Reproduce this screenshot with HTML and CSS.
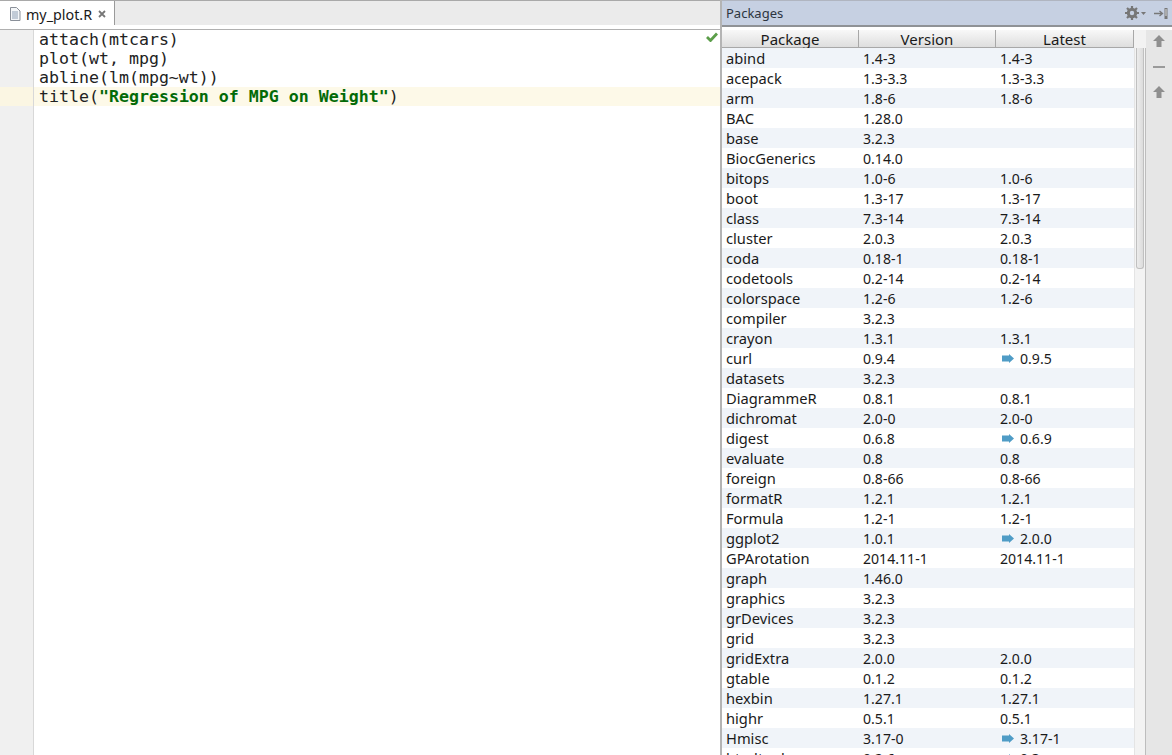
FILE: index.html
```html
<!DOCTYPE html>
<html lang="en">
<head>
<meta charset="utf-8">
<title>my_plot.R</title>
<link rel="stylesheet" href="styles.css">
</head>
<body>
<div class="app">
  <section class="editor">
    <div class="tabbar">
      <div class="tab">
        <svg class="file-icon" width="12" height="14" viewBox="0 0 12 14"><path d="M1.500 .5h6l3.500 3.500v9.500h-9.500z" fill="#f4f6f8" stroke="#8a9099"/><path d="M3 5h6M3 7h6M3 9h6M3 11h6" stroke="#8fa0b5"/></svg>
        <span class="tab-name">my_plot.R</span>
        <svg class="tab-close" width="8" height="8" viewBox="0 0 8 8"><path d="M1 1l6 6M7 1l-6 6" stroke="#777" stroke-width="1.800"/></svg>
      </div>
    </div>
    <div class="code">
      <div class="gutter"><div class="gutter-hl"></div></div>
      <div class="lines">
        <div class="line">attach(mtcars)</div>
        <div class="line">plot(wt, mpg)</div>
        <div class="line">abline(lm(mpg~wt))</div>
        <div class="line current">title(<span class="str">"Regression of MPG on Weight"</span>)</div>
        <svg class="check" width="12" height="10" viewBox="0 0 12 10"><path d="M1 5l3.500 3.500 6.500-7" fill="none" stroke="#5c9e4a" stroke-width="2.800"/></svg>
      </div>
    </div>
  </section>
  <section class="packages">
    <div class="panel-head">
      <span class="panel-title">Packages</span>
      <div class="panel-tools">
        <svg width="14" height="14" viewBox="0 0 14 14"><circle cx="7" cy="7" r="3.700" fill="none" stroke="#777" stroke-width="3"/><path d="M7 0v3M7 11v3M0 7h3M11 7h3M2 2l2 2M10 10l2 2M12 2l-2 2M4 10l-2 2" stroke="#777" stroke-width="2.200"/></svg>
        <svg class="caret" width="5" height="3" viewBox="0 0 5 3"><path d="M0 0h5L2.500 3z" fill="#777"/></svg>
        <svg class="pin" width="14" height="11" viewBox="0 0 14 11"><path d="M0 5.500h8M5.500 3l3 2.500-3 2.500" fill="none" stroke="#777" stroke-width="1.300"/><rect x="10.500" y="0" width="3" height="11" fill="#777"/><rect x="11.500" y="1" width="1" height="7" fill="#ddd"/></svg>
      </div>
    </div>
    <div class="panel-body">
      <div class="table-wrap">
        <div class="thead">
          <div class="th">Package</div>
          <div class="th">Version</div>
          <div class="th">Latest</div>
          <div class="th-corner"></div>
        </div>
        <div class="tbody-wrap">
          <div class="tbody">
            <div class="row"><span>abind</span><span>1.4-3</span><span>1.4-3</span></div>
            <div class="row"><span>acepack</span><span>1.3-3.3</span><span>1.3-3.3</span></div>
            <div class="row"><span>arm</span><span>1.8-6</span><span>1.8-6</span></div>
            <div class="row"><span>BAC</span><span>1.28.0</span><span></span></div>
            <div class="row"><span>base</span><span>3.2.3</span><span></span></div>
            <div class="row"><span>BiocGenerics</span><span>0.14.0</span><span></span></div>
            <div class="row"><span>bitops</span><span>1.0-6</span><span>1.0-6</span></div>
            <div class="row"><span>boot</span><span>1.3-17</span><span>1.3-17</span></div>
            <div class="row"><span>class</span><span>7.3-14</span><span>7.3-14</span></div>
            <div class="row"><span>cluster</span><span>2.0.3</span><span>2.0.3</span></div>
            <div class="row"><span>coda</span><span>0.18-1</span><span>0.18-1</span></div>
            <div class="row"><span>codetools</span><span>0.2-14</span><span>0.2-14</span></div>
            <div class="row"><span>colorspace</span><span>1.2-6</span><span>1.2-6</span></div>
            <div class="row"><span>compiler</span><span>3.2.3</span><span></span></div>
            <div class="row"><span>crayon</span><span>1.3.1</span><span>1.3.1</span></div>
            <div class="row"><span>curl</span><span>0.9.4</span><span class="upd"><svg class="arrow" width="12" height="9" viewBox="0 0 12 9"><path d="M0 1.500h7V0l5 4.500-5 4.500V7.500H0z" fill="#4f9cc6"/></svg>0.9.5</span></div>
            <div class="row"><span>datasets</span><span>3.2.3</span><span></span></div>
            <div class="row"><span>DiagrammeR</span><span>0.8.1</span><span>0.8.1</span></div>
            <div class="row"><span>dichromat</span><span>2.0-0</span><span>2.0-0</span></div>
            <div class="row"><span>digest</span><span>0.6.8</span><span class="upd"><svg class="arrow" width="12" height="9" viewBox="0 0 12 9"><path d="M0 1.500h7V0l5 4.500-5 4.500V7.500H0z" fill="#4f9cc6"/></svg>0.6.9</span></div>
            <div class="row"><span>evaluate</span><span>0.8</span><span>0.8</span></div>
            <div class="row"><span>foreign</span><span>0.8-66</span><span>0.8-66</span></div>
            <div class="row"><span>formatR</span><span>1.2.1</span><span>1.2.1</span></div>
            <div class="row"><span>Formula</span><span>1.2-1</span><span>1.2-1</span></div>
            <div class="row"><span>ggplot2</span><span>1.0.1</span><span class="upd"><svg class="arrow" width="12" height="9" viewBox="0 0 12 9"><path d="M0 1.500h7V0l5 4.500-5 4.500V7.500H0z" fill="#4f9cc6"/></svg>2.0.0</span></div>
            <div class="row"><span>GPArotation</span><span>2014.11-1</span><span>2014.11-1</span></div>
            <div class="row"><span>graph</span><span>1.46.0</span><span></span></div>
            <div class="row"><span>graphics</span><span>3.2.3</span><span></span></div>
            <div class="row"><span>grDevices</span><span>3.2.3</span><span></span></div>
            <div class="row"><span>grid</span><span>3.2.3</span><span></span></div>
            <div class="row"><span>gridExtra</span><span>2.0.0</span><span>2.0.0</span></div>
            <div class="row"><span>gtable</span><span>0.1.2</span><span>0.1.2</span></div>
            <div class="row"><span>hexbin</span><span>1.27.1</span><span>1.27.1</span></div>
            <div class="row"><span>highr</span><span>0.5.1</span><span>0.5.1</span></div>
            <div class="row"><span>Hmisc</span><span>3.17-0</span><span class="upd"><svg class="arrow" width="12" height="9" viewBox="0 0 12 9"><path d="M0 1.500h7V0l5 4.500-5 4.500V7.500H0z" fill="#4f9cc6"/></svg>3.17-1</span></div>
            <div class="row"><span>htmltools</span><span>0.2.6</span><span class="upd"><svg class="arrow" width="12" height="9" viewBox="0 0 12 9"><path d="M0 1.500h7V0l5 4.500-5 4.500V7.500H0z" fill="#4f9cc6"/></svg>0.3</span></div>
          </div>
          <div class="scrollbar"><div class="thumb"></div></div>
        </div>
      </div>
      <div class="side-tools">
        <svg width="12" height="12" viewBox="0 0 12 12"><path d="M6 0l6 6H8.500v6h-5V6H0z" fill="#8f8f8f"/></svg>
        <div class="side-dash"></div>
        <svg width="12" height="12" viewBox="0 0 12 12"><path d="M6 0l6 6H8.500v6h-5V6H0z" fill="#8f8f8f"/></svg>
      </div>
    </div>
  </section>
</div>
</body>
</html>
```

FILE: styles.css
```css
html, body {
  margin: 0;
  padding: 0;
  height: 100%;
  overflow: hidden;
  background: #fff;
}
.app {
  display: flex;
  height: 755px;
  font-family: "Noto Sans", "Open Sans", sans-serif;
  color: #1a1a1a;
}
.editor {
  width: 720px;
  display: flex;
  flex-direction: column;
  flex: none;
}
.tabbar {
  height: 30px;
  flex: none;
  box-sizing: border-box;
  background: #ebebeb;
  border-top: 1px solid #a9a9a9;
  border-bottom: 5px solid transparent;
  position: relative;
  display: flex;
}
.tabbar::after {
  content: "";
  position: absolute;
  left: 0;
  right: 0;
  bottom: -5px;
  height: 5px;
  background: linear-gradient(#fff 0 4px, #b0b0b0 4px);
}
.tab {
  width: 115px;
  height: 24px;
  box-sizing: border-box;
  background: #fff;
  border-right: 1px solid #9a9a9a;
  display: flex;
  align-items: center;
  padding: 2px 0 0 9px;
  position: relative;
  z-index: 1;
}
.file-icon { flex: none; }
.tab-name {
  margin-left: 5px;
  font-size: 14.3px;
}
.tab-close {
  margin-left: 6px;
}
.code {
  flex: 1;
  display: flex;
  min-height: 0;
}
.gutter {
  width: 33px;
  flex: none;
  background: #f0f0f0;
  border-right: 1px solid #d8d8d8;
  padding-top: 57px;
}
.gutter-hl {
  height: 19px;
  background: #fbf6e3;
}
.lines {
  flex: 1;
  position: relative;
  font-family: "DejaVu Sans Mono", monospace;
  font-size: 16.6px;
  line-height: 19px;
  color: #222;
}
.line {
  padding-left: 5px;
  height: 19px;
  white-space: pre;
}
.current { background: #fdf9e8; }
.str {
  color: #036a07;
  font-weight: bold;
}
.check {
  position: absolute;
  right: 2px;
  top: 2px;
}
.packages {
  flex: 1;
  display: flex;
  flex-direction: column;
  min-width: 0;
  border-left: 2px solid #b4b4b4;
}
.panel-head {
  height: 27px;
  flex: none;
  box-sizing: border-box;
  background: #c6d0e2;
  border-top: 1px solid #b0b5c0;
  border-bottom: 2px solid #8f9296;
  display: flex;
  align-items: center;
  justify-content: space-between;
  padding: 0 4px 0 4px;
}
.panel-title {
  font-size: 13px;
  color: #2d3540;
}
.panel-tools {
  display: flex;
  align-items: center;
}
.caret { margin-left: 2px; }
.pin { margin-left: 8px; }
.panel-body {
  flex: 1;
  display: flex;
  min-height: 0;
  padding-top: 3px;
  background: #fff;
}
.table-wrap {
  width: 424px;
  flex: none;
  display: flex;
  flex-direction: column;
  min-height: 0;
}
.thead {
  height: 18px;
  flex: none;
  box-sizing: border-box;
  display: grid;
  grid-template-columns: 137px 137px 138px 1fr;
  background: linear-gradient(#f8f8f8, #dedede);
  border-bottom: 1px solid #a8a8a8;
}
.th {
  font-size: 15px;
  line-height: 18px;
  text-align: center;
  border-right: 1px solid #a8a8a8;
  color: #1a1a1a;
}
.th-corner {
  background: #f2f2f2;
}
.tbody-wrap {
  flex: 1;
  display: flex;
  min-height: 0;
  overflow: hidden;
}
.tbody {
  width: 412px;
  flex: none;
  overflow: hidden;
}
.row {
  height: 20px;
  display: grid;
  grid-template-columns: 137px 137px 1fr;
  font-size: 14.7px;
  line-height: 20px;
  white-space: nowrap;
}
.row:nth-child(odd) { background: #f0f4f9; }
.row span { padding-left: 4px; }
.row span + span {
  font-size: 14.1px;
  line-height: 22px;
}
.row .upd {
  display: flex;
  align-items: center;
}
.arrow {
  margin: -2px 6px 0 2px;
  flex: none;
}
.scrollbar {
  flex: 1;
  background: #f3f3f3;
  border-left: 1px solid #e4e4e4;
  border-right: 1px solid #bdbdbd;
  padding: 0 1px;
}
.thumb {
  height: 221px;
  box-sizing: border-box;
  background: linear-gradient(90deg, #ececec, #dcdcdc);
  border: 1px solid #c0c0c0;
  border-top: 0;
  border-radius: 0 0 3px 3px;
}
.side-tools {
  flex: 1;
  background: #e6e6e6;
  display: flex;
  flex-direction: column;
  align-items: center;
  padding-top: 5px;
}
.side-dash {
  width: 12px;
  height: 2px;
  background: #9a9a9a;
  margin: 19px 0 18px;
}
```
